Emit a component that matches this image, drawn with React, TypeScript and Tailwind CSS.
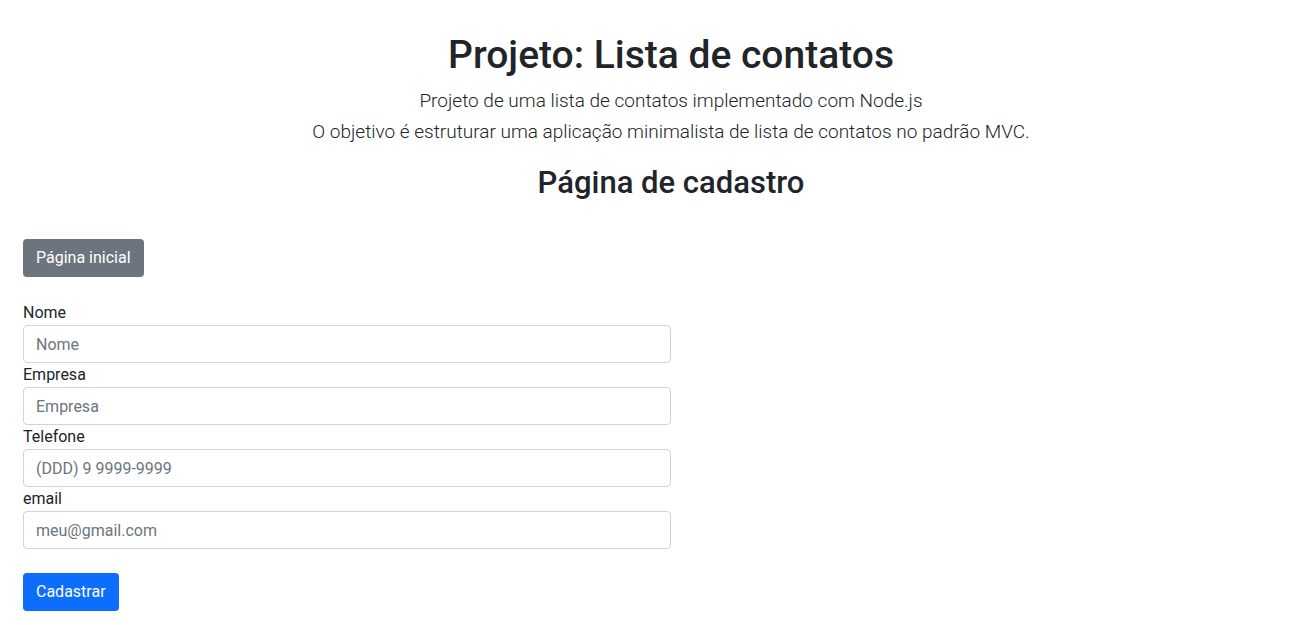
export default function App() {
  const fields = [
    { label: "Nome", placeholder: "Nome" },
    { label: "Empresa", placeholder: "Empresa" },
    { label: "Telefone", placeholder: "(DDD) 9 9999-9999" },
    { label: "email", placeholder: "meu@gmail.com" },
  ];

  return (
    <main className="min-h-screen bg-white text-[#212529] font-['Roboto',sans-serif] px-[23px]">
      <div className="flex flex-col items-center text-center pt-[31px] pl-[38px]">
        <h1 className="text-[39px] leading-[48px] font-medium">Projeto: Lista de contatos</h1>
        <p className="mt-[6px] text-[19px] leading-[31px] font-light">
          Projeto de uma lista de contatos implementado com Node.js
        </p>
        <p className="text-[19px] leading-[31px] font-light">
          O objetivo é estruturar uma aplicação minimalista de lista de contatos no padrão MVC.
        </p>
        <h2 className="mt-[17px] text-[31px] leading-[38px] font-medium">Página de cadastro</h2>
      </div>

      <button className="mt-[37px] h-[38px] px-[13px] rounded-[4px] bg-[#6c757d] text-white text-[16px]">
        Página inicial
      </button>

      <form className="mt-[24px] w-[648px]">
        {fields.map((f) => (
          <div key={f.label}>
            <label className="block text-[16px] leading-[24px]">{f.label}</label>
            <input
              placeholder={f.placeholder}
              className="block w-full h-[38px] px-[12px] border border-[#ced4da] rounded-[4px] text-[16px] placeholder:text-[#6c757d] outline-none"
            />
          </div>
        ))}
        <button
          type="button"
          className="mt-[24px] h-[38px] px-[13px] rounded-[4px] bg-[#0d6efd] text-white text-[16px]"
        >
          Cadastrar
        </button>
      </form>
    </main>
  );
}
